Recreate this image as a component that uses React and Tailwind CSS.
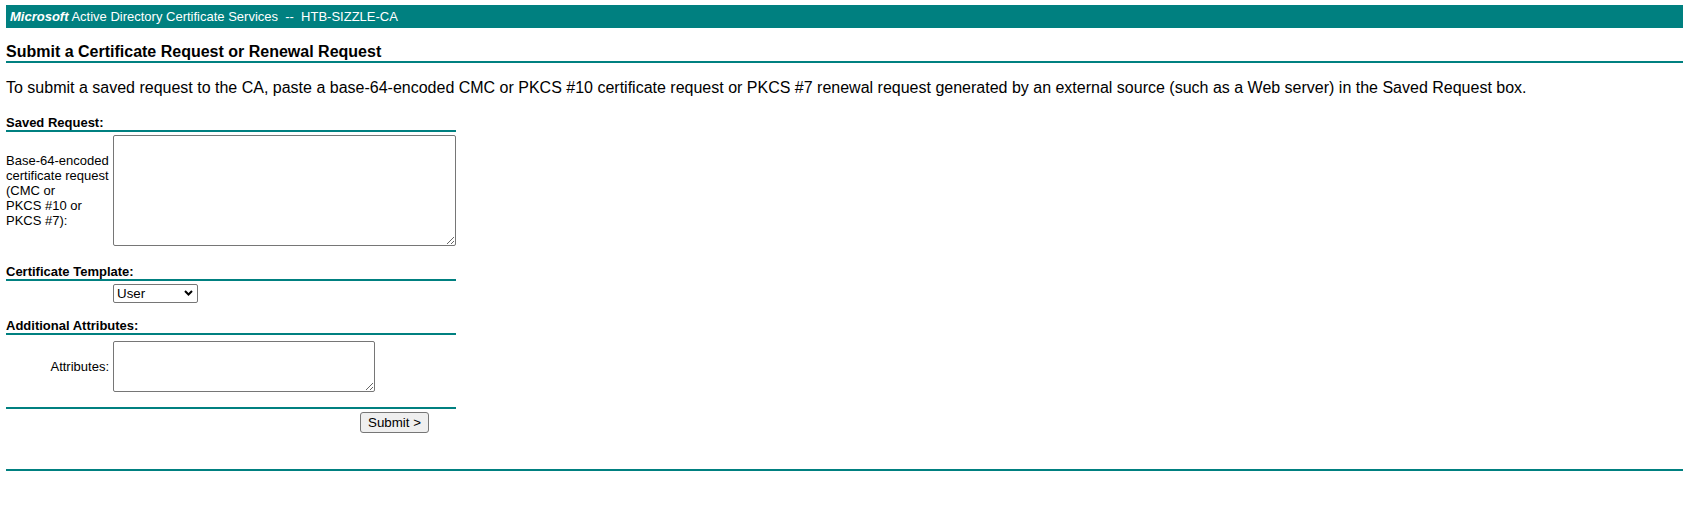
import React from "react";

function SectionHeader({ children, className = "" }) {
  return (
    <div
      className={`border-b-2 border-[#008080] text-[13px] font-bold leading-[14px] ${className}`}
    >
      {children}
    </div>
  );
}

export default function App() {
  return (
    <div className="min-h-[529px] bg-white pl-[6px] pt-[5px] font-['Liberation_Sans',Arial,sans-serif] text-black">
      <div className="flex h-[23px] items-center bg-[#008080] pl-[4px] text-[13px] text-white whitespace-pre">
        <span className="font-bold italic">Microsoft</span>
        <span>{" Active Directory Certificate Services\u00a0 --\u00a0 HTB-SIZZLE-CA"}</span>
      </div>

      <div className="mt-[15px] border-b-2 border-[#008080] text-[16px] font-bold leading-[18px]">
        Submit a Certificate Request or Renewal Request
      </div>

      <p className="mt-[16px] text-[16px] leading-[18px]">
        To submit a saved request to the CA, paste a base-64-encoded CMC or PKCS #10 certificate
        request or PKCS #7 renewal request generated by an external source (such as a Web server) in
        the Saved Request box.
      </p>

      <div className="mt-[19px] w-[450px]">
        <SectionHeader>Saved Request:</SectionHeader>
        <div className="mt-[3px] flex items-center">
          <div className="w-[107px] text-[13px] leading-[15px]">
            Base-64-encoded
            <br />
            certificate request
            <br />
            (CMC or
            <br />
            PKCS #10 or
            <br />
            PKCS #7):
          </div>
          <textarea className="block h-[111px] w-[343px] resize rounded-[2px] border border-[#767676] bg-white" />
        </div>

        <SectionHeader className="mt-[19px]">Certificate Template:</SectionHeader>
        <div className="mt-[3px] pl-[107px]">
          <div className="relative h-[19px] w-[85px]">
            <select className="block h-[19px] w-[85px] appearance-none rounded-[2px] border border-[#767676] bg-white pl-[3px] text-[13.33px] leading-[17px]">
              <option>User</option>
            </select>
            <svg
              className="pointer-events-none absolute right-[5px] top-[6px]"
              width="9"
              height="6"
              viewBox="0 0 9 6"
            >
              <path d="M1 1 L4.5 4.5 L8 1" fill="none" stroke="#000" strokeWidth="2" />
            </svg>
          </div>
        </div>

        <SectionHeader className="mt-[16px]">Additional Attributes:</SectionHeader>
        <div className="mt-[6px] flex items-center">
          <div className="w-[107px] pr-[4px] text-right text-[13px] leading-[15px]">Attributes:</div>
          <textarea className="block h-[51px] w-[262px] resize rounded-[2px] border border-[#767676] bg-white" />
        </div>

        <div className="mt-[15px] border-t-2 border-[#008080]" />
        <div className="mt-[3px] pl-[354px]">
          <button className="block h-[21px] w-[69px] rounded-[3px] border border-[#767676] bg-[#efefef] text-[13.33px] leading-[19px]">
            Submit &gt;
          </button>
        </div>
      </div>

      <div className="mt-[36px] border-t-2 border-[#008080]" />
    </div>
  );
}
